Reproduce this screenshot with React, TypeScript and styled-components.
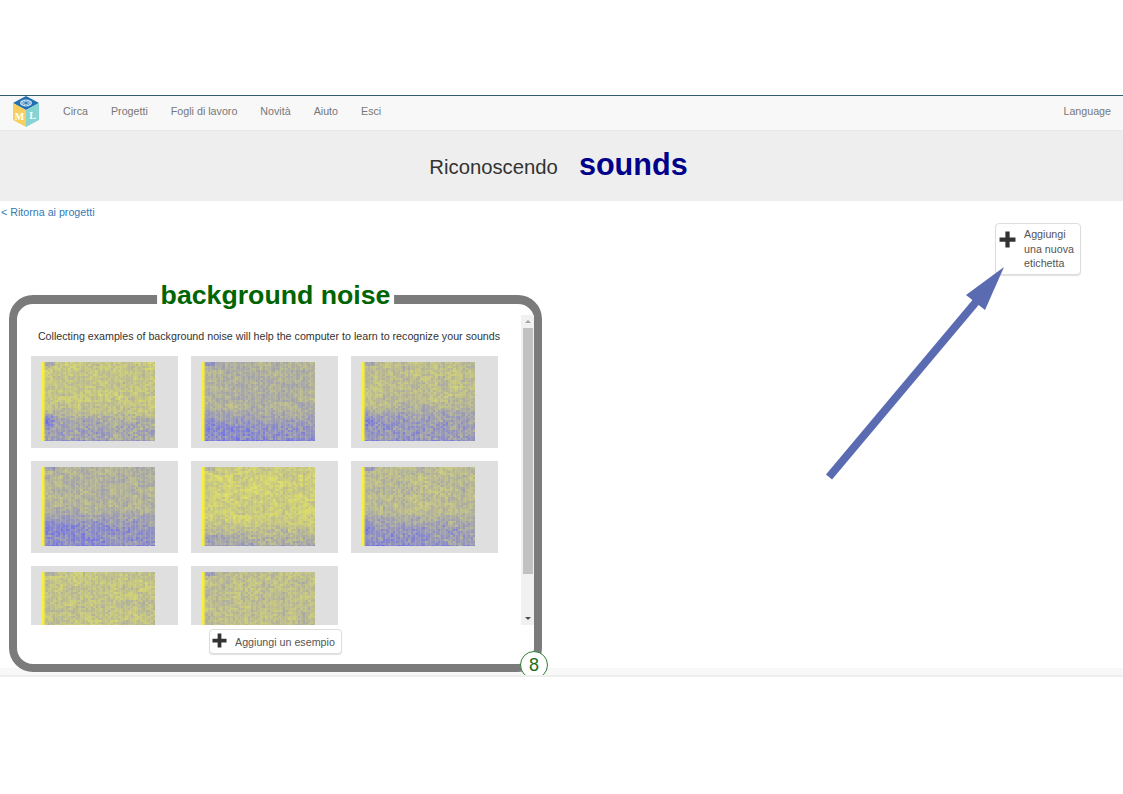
import React, { useMemo } from "react";
import styled, { createGlobalStyle } from "styled-components";

/**--------------------------------
    Page data
-----------------------------------*/
const NAV_LINKS = ["Circa", "Progetti", "Fogli di lavoro", "Novità", "Aiuto", "Esci"];

// yellow = how grey/blue the upper part is, band = where the blue noise starts, blob = dark patch on the left
const SAMPLES = [
    { seed: 11, yellow: 0.24, band: 0.66, blob: 0.9 },
    { seed: 23, yellow: 0.4, band: 0.7, blob: 0.2 },
    { seed: 37, yellow: 0.3, band: 0.6, blob: 0.4 },
    { seed: 41, yellow: 0.38, band: 0.62, blob: 0.2 },
    { seed: 59, yellow: 0.18, band: 0.78, blob: 0.1 },
    { seed: 67, yellow: 0.33, band: 0.66, blob: 0.5 },
    { seed: 71, yellow: 0.26, band: 0.86, blob: 0.1 },
    { seed: 83, yellow: 0.3, band: 0.9, blob: 0.1 },
];

/**--------------------------------
    Styled Components
-----------------------------------*/
const GlobalStyle = createGlobalStyle`
    html, body {
        margin: 0;
        background: #fff;
        font-family: "Liberation Sans", Arial, sans-serif;
    }
`;

const Page = styled.div`
    position: relative;
    box-sizing: border-box;
    height: 677px;
    padding-top: 95px;
    overflow: hidden;
    border-bottom: 2px solid #eee;
    background: linear-gradient(to bottom, #fff 668px, #f8f8f8 668px);
`;

const Nav = styled.nav`
    display: flex;
    align-items: center;
    box-sizing: border-box;
    height: 36px;
    padding: 0 12px 3px 13px;
    background: #f8f8f8;
    border-top: 1px solid #2f5d6b;
    border-bottom: 1px solid #e7e7e7;
`;

const NavLinks = styled.div`
    display: flex;
    gap: 23px;
    margin-left: 24px;
    flex: 1;
    padding-bottom: 2px;
`;

const NavLink = styled.a`
    font-size: 10.7px;
    color: #777;
`;

const LanguageLink = styled(NavLink)`
    padding-bottom: 2px;
`;

const TitleBar = styled.header`
    display: flex;
    align-items: center;
    justify-content: center;
    gap: 21px;
    height: 70px;
    padding: 0 6px 3px 0;
    box-sizing: border-box;
    background: #eee;
`;

const TitleLabel = styled.span`
    font-size: 20.3px;
    color: #333;
    padding-top: 5px;
`;

const TitleName = styled.span`
    font-size: 30.6px;
    font-weight: 700;
    color: #00008b;
`;

const BackLink = styled.a`
    display: block;
    height: 22px;
    padding: 4px 0 0 1px;
    box-sizing: border-box;
    font-size: 10.7px;
    line-height: 14px;
    color: #337ab7;
`;

const Workspace = styled.main`
    position: relative;
    display: flex;
    align-items: flex-start;
    justify-content: space-between;
    padding: 0 42px 0 9px;
`;

const LabelCard = styled.section`
    position: relative;
    box-sizing: border-box;
    width: 533px;
    height: 377px;
    margin-top: 72px;
    border-style: solid;
    border-width: 9px 8px 8px;
    border-color: #7b7b7b;
    border-radius: 24px;
    background: #fff;
`;

const LabelName = styled.h2`
    position: absolute;
    top: -26px;
    left: 50%;
    transform: translateX(-50%);
    margin: 0;
    padding: 0 4px;
    background: #fff;
    font-size: 26.7px;
    line-height: 34px;
    font-weight: 700;
    white-space: nowrap;
    color: #006400;
`;

const ScrollArea = styled.div`
    display: flex;
    height: 310px;
    margin-top: 11px;
    overflow: hidden;
`;

const ScrollContent = styled.div`
    width: 504px;
`;

const Description = styled.p`
    margin: 0;
    padding-top: 14px;
    height: 41px;
    box-sizing: border-box;
    font-size: 10.7px;
    line-height: 15px;
    text-align: center;
    color: #333;
`;

const SampleGrid = styled.div`
    display: grid;
    grid-template-columns: repeat(3, 147px);
    gap: 13px;
    padding-left: 14px;
`;

const SampleTile = styled.div`
    height: 92px;
    padding: 6px 0 0 11px;
    box-sizing: border-box;
    background: #dfdfdf;
`;

const Scrollbar = styled.div`
    display: flex;
    flex-direction: column;
    align-items: center;
    width: 13px;
    background: #f1f1f1;
`;

const ScrollArrow = styled.div<{ $down?: boolean }>`
    width: 0;
    height: 0;
    margin: 5px 0;
    border-left: 3px solid transparent;
    border-right: 3px solid transparent;
    border-bottom: ${({ $down }) => ($down ? "0" : "3px solid #a3a3a3")};
    border-top: ${({ $down }) => ($down ? "3px solid #505050" : "0")};
`;

const ScrollThumb = styled.div`
    width: 10px;
    height: 246px;
    margin-bottom: auto;
    background: #c1c1c1;
`;

const ActionButton = styled.button`
    display: flex;
    align-items: center;
    box-sizing: border-box;
    padding: 0;
    background: #fff;
    border: 1px solid #ddd;
    border-radius: 4px;
    box-shadow: 0 1px 1px rgba(0, 0, 0, 0.12);
    font-family: inherit;
    font-size: 10.7px;
    line-height: 14.7px;
    text-align: left;
    color: #555;
`;

const AddExample = styled(ActionButton)`
    gap: 8px;
    width: 133px;
    height: 25px;
    margin: 4px auto 0;
    padding: 1px 0 0 2px;
    white-space: nowrap;
`;

const AddLabel = styled(ActionButton)`
    gap: 8px;
    width: 86px;
    height: 52px;
    padding: 0 0 0 3px;
    white-space: nowrap;
`;

const PlusIcon = styled.svg`
    flex: none;
    width: 15px;
    height: 15px;
    margin-bottom: 3px;
    fill: #333;
`;

const AddLabelPlus = styled(PlusIcon)`
    width: 17px;
    height: 17px;
    margin-bottom: 20px;
`;

const CountBadge = styled.div`
    position: absolute;
    right: -14px;
    bottom: -15px;
    box-sizing: border-box;
    width: 28px;
    height: 28px;
    border: 1px solid #2e7d32;
    border-radius: 50%;
    background: #fff;
    font-size: 18px;
    line-height: 26px;
    text-align: center;
    color: #1b6e1b;
`;

const ArrowOverlay = styled.svg`
    position: absolute;
    top: 41px;
    left: 820px;
    width: 190px;
    height: 225px;
    pointer-events: none;
`;

const SpectrogramSvg = styled.svg`
    display: block;
    width: 113px;
    height: 79px;
    filter: blur(0.75px);
`;

/**--------------------------------
    Drawings
-----------------------------------*/
const Logo = () => (
    <svg width="26" height="31" viewBox="0 0 26 31" style={{ flex: "none" }}>
        <polygon points="13,0 26,7 13,14 0,7" fill="#1f6fb2" />
        <polygon points="0,7 13,14 13,31 0,24" fill="#f6cf5f" />
        <polygon points="26,7 13,14 13,31 26,24" fill="#86d3d3" />
        <ellipse cx="13" cy="7" rx="6" ry="3.4" fill="#cfe4f5" />
        <path d="M8 7h10M13 4v6M9.5 4.8l7 4.4M16.5 4.8l-7 4.4" stroke="#1f6fb2" strokeWidth="0.7" />
        <text x="6.5" y="24" fontSize="10" fontWeight="700" fontFamily="Liberation Serif, serif" textAnchor="middle" fill="#fff">M</text>
        <text x="19.5" y="23" fontSize="10" fontWeight="700" fontFamily="Liberation Serif, serif" textAnchor="middle" fill="#fff">L</text>
    </svg>
);

const Plus = () => (
    <path d="M6 .5h4v5.5h5.5v4H10v5.5H6V10H.5V6H6z" />
);

// Noise based spectrogram: mostly yellow, turning blue near the bottom
const Spectrogram: React.FC<{ seed: number; yellow: number; band: number; blob: number }> = ({ seed, yellow, band, blob }) => {
    const cells = useMemo(() => {
        let state = seed * 7919;
        const random = () => {
            state = (state * 1664525 + 1013904223) % 4294967296;
            return state / 4294967296;
        };
        const cols = 45;
        const rows = 40;
        // Coarse noise layer, so that the colour drifts in patches and not cell by cell
        const coarse = Array.from({ length: 12 * 12 }, () => random() - 0.5);
        const smooth = (v: number) => v * v * (3 - 2 * v);
        const list: { x: number; y: number; fill: string }[] = [];
        for (let r = 0; r < rows; r++) {
            for (let c = 0; c < cols; c++) {
                const fy = r / rows;
                const fx = c / cols;
                const patch = coarse[Math.floor(fy * 12) * 12 + Math.floor(fx * 12)];
                const rise = smooth(Math.min(1, Math.max(0, (fy - band + 0.16) / 0.32)));
                let t = yellow + (random() - 0.5) * 0.2 + patch * 0.1;
                t += rise * (0.3 - fx * 0.1) + rise * (random() - 0.5) * 0.2;
                // Soft dark patch near the left edge
                const dx = fx / 0.12;
                const dy = (fy - 0.72) / 0.12;
                t += 0.3 * blob * Math.max(0, 1 - dx * dx - dy * dy);
                if (fy > 0.96) t += 0.14;
                if (fy < 0.03 && fx < 0.1) t += 0.2;
                if (c % 8 === 0) t += 0.04;
                t = Math.min(0.95, Math.max(0, t));
                const red = Math.round(230 - t * 135);
                const blue = Math.round(92 + t * 160);
                list.push({ x: c * 2.5, y: r * 2, fill: `rgb(${red},${red},${blue})` });
            }
        }
        return list;
    }, [seed, yellow, band, blob]);

    return (
        <SpectrogramSvg viewBox="0 0 113 79" preserveAspectRatio="none">
            {cells.map((cell) => (
                <rect key={`${cell.x}-${cell.y}`} x={cell.x + 1} y={cell.y} width="2.6" height="2.1" fill={cell.fill} />
            ))}
            <rect x="0" y="0" width="2.6" height="79" fill="#f7ef3a" />
        </SpectrogramSvg>
    );
};

/**--------------------------------
    App
-----------------------------------*/
export default function App() {
    return (
        <>
            <GlobalStyle />
            <Page>
                <Nav>
                    <Logo />
                    <NavLinks>
                        {NAV_LINKS.map((link) => (
                            <NavLink key={link}>{link}</NavLink>
                        ))}
                    </NavLinks>
                    <LanguageLink>Language</LanguageLink>
                </Nav>

                <TitleBar>
                    <TitleLabel>Riconoscendo</TitleLabel>
                    <TitleName>sounds</TitleName>
                </TitleBar>

                <BackLink>&lt; Ritorna ai progetti</BackLink>

                <Workspace>
                    <LabelCard>
                        <LabelName>background noise</LabelName>
                        <ScrollArea>
                            <ScrollContent>
                                <Description>
                                    Collecting examples of background noise will help the computer to learn to recognize your sounds
                                </Description>
                                <SampleGrid>
                                    {SAMPLES.map((sample) => (
                                        <SampleTile key={sample.seed}>
                                            <Spectrogram {...sample} />
                                        </SampleTile>
                                    ))}
                                </SampleGrid>
                            </ScrollContent>
                            <Scrollbar>
                                <ScrollArrow />
                                <ScrollThumb />
                                <ScrollArrow $down />
                            </Scrollbar>
                        </ScrollArea>
                        <AddExample>
                            <PlusIcon viewBox="0 0 16 16"><Plus /></PlusIcon>
                            Aggiungi un esempio
                        </AddExample>
                        <CountBadge>8</CountBadge>
                    </LabelCard>

                    <AddLabel>
                        <AddLabelPlus viewBox="0 0 16 16"><Plus /></AddLabelPlus>
                        <span>Aggiungi<br />una nuova<br />etichetta</span>
                    </AddLabel>

                    <ArrowOverlay viewBox="0 0 190 225">
                        <path d="M9 213 L161 32" stroke="#5a6bb2" strokeWidth="8" fill="none" />
                        <polygon points="184,3 146,31 165,46" fill="#5a6bb2" />
                    </ArrowOverlay>
                </Workspace>
            </Page>
        </>
    );
}
